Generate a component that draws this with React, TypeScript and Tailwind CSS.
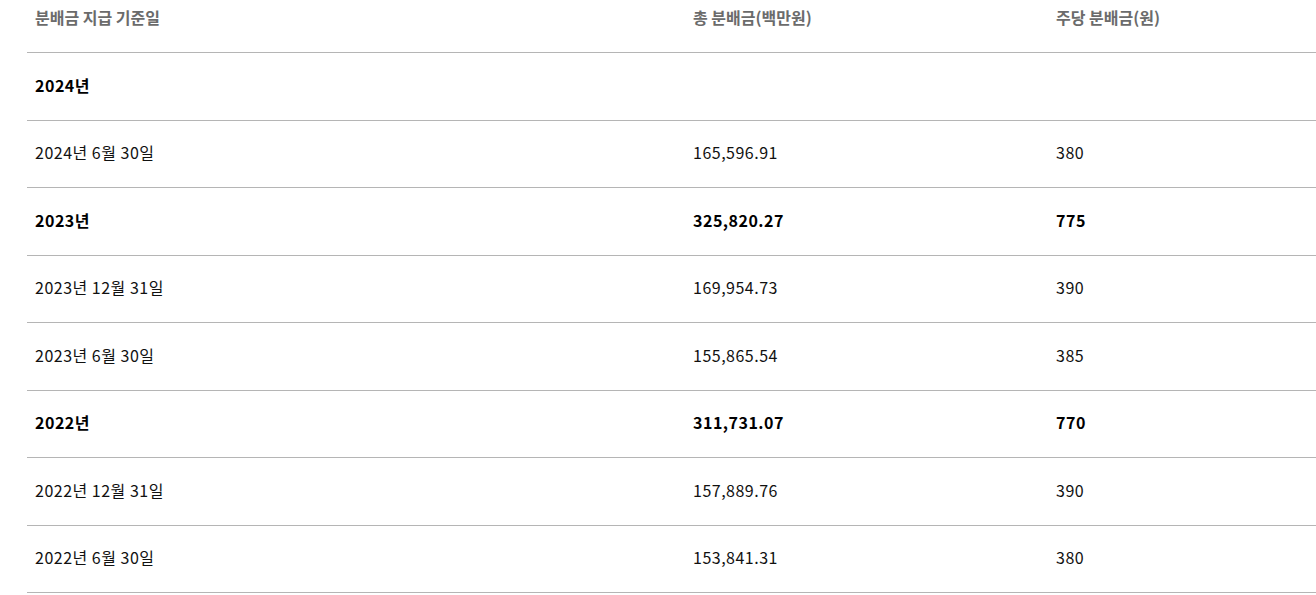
import React from "react";

type Row = { d: string; t: string; p: string; bold?: boolean };

const rows: Row[] = [
  { d: "2024년", t: "", p: "", bold: true },
  { d: "2024년 6월 30일", t: "165,596.91", p: "380" },
  { d: "2023년", t: "325,820.27", p: "775", bold: true },
  { d: "2023년 12월 31일", t: "169,954.73", p: "390" },
  { d: "2023년 6월 30일", t: "155,865.54", p: "385" },
  { d: "2022년", t: "311,731.07", p: "770", bold: true },
  { d: "2022년 12월 31일", t: "157,889.76", p: "390" },
  { d: "2022년 6월 30일", t: "153,841.31", p: "380" },
];

export default function App() {
  return (
    <div
      className="w-[1316px] h-[595px] bg-white overflow-hidden pl-[27px]"
      style={{ fontFamily: '"Noto Sans CJK KR", "Noto Sans", sans-serif' }}
    >
      <div className="w-[1300px]">
        <div className="flex h-[53px] border-b border-[#b5b5b5] text-[16px] leading-[24px] font-bold text-[#6b6b6b] pt-[5px]">
          <div className="w-[658px] px-2">분배금 지급 기준일</div>
          <div className="w-[363px] px-2">총 분배금(백만원)</div>
          <div className="flex-1 px-2">주당 분배금(원)</div>
        </div>
        {rows.map((r, i) => (
          <div
            key={i}
            className={`flex items-center h-[67.5px] border-b border-[#b5b5b5] text-[16px] leading-[24px] tracking-[0.5px] pb-[3px] ${
              r.bold ? "font-bold text-black" : "text-[#111]"
            }`}
          >
            <div className="w-[658px] px-2">{r.d}</div>
            <div className="w-[363px] px-2">{r.t}</div>
            <div className="flex-1 px-2">{r.p}</div>
          </div>
        ))}
      </div>
    </div>
  );
}
